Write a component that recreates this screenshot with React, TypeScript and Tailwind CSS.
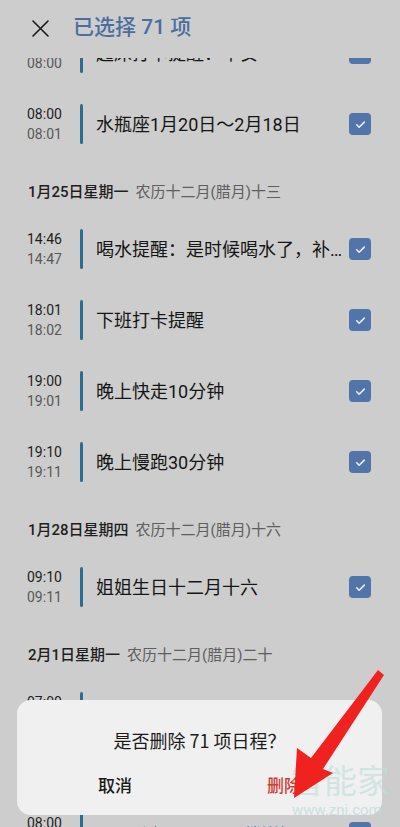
import React from 'react';

type Item = {s: string; e: string; t: string};
type Group = {day?: string; lunar?: string; items: Item[]};

const groups: Group[] = [
  {
    items: [
      {s: '07:59', e: '08:00', t: '起床打卡提醒：早安'},
      {s: '08:00', e: '08:01', t: '水瓶座1月20日～2月18日'},
    ],
  },
  {
    day: '1月25日星期一',
    lunar: '农历十二月(腊月)十三',
    items: [
      {s: '14:46', e: '14:47', t: '喝水提醒：是时候喝水了，补充水分'},
      {s: '18:01', e: '18:02', t: '下班打卡提醒'},
      {s: '19:00', e: '19:01', t: '晚上快走10分钟'},
      {s: '19:10', e: '19:11', t: '晚上慢跑30分钟'},
    ],
  },
  {
    day: '1月28日星期四',
    lunar: '农历十二月(腊月)十六',
    items: [{s: '09:10', e: '09:11', t: '姐姐生日十二月十六'}],
  },
  {
    day: '2月1日星期一',
    lunar: '农历十二月(腊月)二十',
    items: [{s: '07:00', e: '07:01', t: '起床打卡提醒'}],
  },
];

const Check = () => (
  <div className="w-[22px] h-[22px] rounded-[4px] bg-[#5175a9] flex items-center justify-center shrink-0">
    <svg width="13" height="13" viewBox="0 0 24 24" fill="none" stroke="#e8edf4" strokeWidth="3" strokeLinecap="round" strokeLinejoin="round">
      <path d="M5 12.5l4.5 4.5L19 7.5" />
    </svg>
  </div>
);

const Row: React.FC<{item: Item}> = ({item}) => (
  <div className="h-[71px] flex items-center pr-[29px]">
    <div className="w-[80px] pl-[27px] text-[14px] leading-5 shrink-0">
      <div className="text-[#1e1e1e]">{item.s}</div>
      <div className="text-[#585858]">{item.e}</div>
    </div>
    <div className="w-[3px] h-10 bg-[#2c6d8f] rounded-full shrink-0" />
    <div className="ml-[13px] mr-[6px] flex-1 min-w-0 truncate text-[18px] text-[#151515]">{item.t}</div>
    <Check />
  </div>
);

export default function App() {
  return (
    <div
      className="relative w-[400px] h-[827px] overflow-hidden bg-[#cdcdcd]"
      style={{fontFamily: 'Roboto, "Noto Sans CJK SC", sans-serif'}}
    >
      <div className="relative z-10 h-[58px] bg-[#cdcdcd] flex items-center pl-[32px] pb-[2px]">
        <svg width="17" height="17" viewBox="0 0 17 17" stroke="#1a1a1a" strokeWidth="1.6" strokeLinecap="round">
          <path d="M1 1l15 15M16 1L1 16" />
        </svg>
        <span className="ml-[24px] text-[21px] font-medium text-[#4b6e9f]">已选择 71 项</span>
      </div>

      <div className="mt-[-40.5px]">
        {groups.map((g, gi) => (
          <div key={gi}>
            {g.day && (
              <div className="h-[54px] pt-[22px] pl-[28px] text-[15px] leading-5">
                <span className="font-medium text-[#1e1e1e]">{g.day}</span>
                <span className="ml-[7px] text-[#5e5e5e]">{g.lunar}</span>
              </div>
            )}
            {g.items.map((it, i) => (
              <Row key={i} item={it} />
            ))}
          </div>
        ))}
        <div className="h-[50px]" />
        <div className="h-[71px] flex items-center pr-[29px]">
          <div className="w-[80px] pl-[27px] text-[14px] leading-5 shrink-0">
            <div className="text-[#1e1e1e]">08:00</div>
            <div className="text-[#585858]">08:01</div>
          </div>
          <div className="w-[3px] h-10 bg-[#2c6d8f] rounded-full shrink-0" />
          <div className="ml-[49px] w-[100px] text-[14px] text-[#1e1e1e]">删除</div>
          <div className="flex-1 text-[14px] text-[#2f63b8]">取消关注</div>
          <Check />
        </div>
      </div>

      <div className="absolute left-[17px] right-[18px] top-[700px] h-[115px] rounded-[14px] bg-[#f0f0f0] flex flex-col">
        <div
          className="pt-[28px] text-center text-[18px] leading-6 text-[#1a1a1a]"
          style={{fontFamily: '"Noto Sans CJK SC", sans-serif'}}
        >
          是否删除 71 项日程？
        </div>
        <div className="mt-[22px] flex text-[17px] leading-6 font-medium px-[81px]">
          <div className="text-[#1a1a1a]">取消</div>
          <div className="ml-auto text-[#d23c33]">删除</div>
        </div>
      </div>

      <div className="absolute left-[291px] top-[764px] text-[33px] leading-9 text-[#bfdcdc] opacity-60 pointer-events-none">智能家</div>
      <div className="absolute left-[292px] top-[800px] text-[15px] leading-5 text-[#c4dcdc] opacity-80 pointer-events-none">www.znj.com</div>

      <svg className="absolute left-0 top-0 pointer-events-none" width="400" height="827">
        <polygon
          points="294,798 297,748 311,758 378,670 384,675 323,769 333,773"
          fill="#f0221f"
        />
      </svg>
    </div>
  );
}
